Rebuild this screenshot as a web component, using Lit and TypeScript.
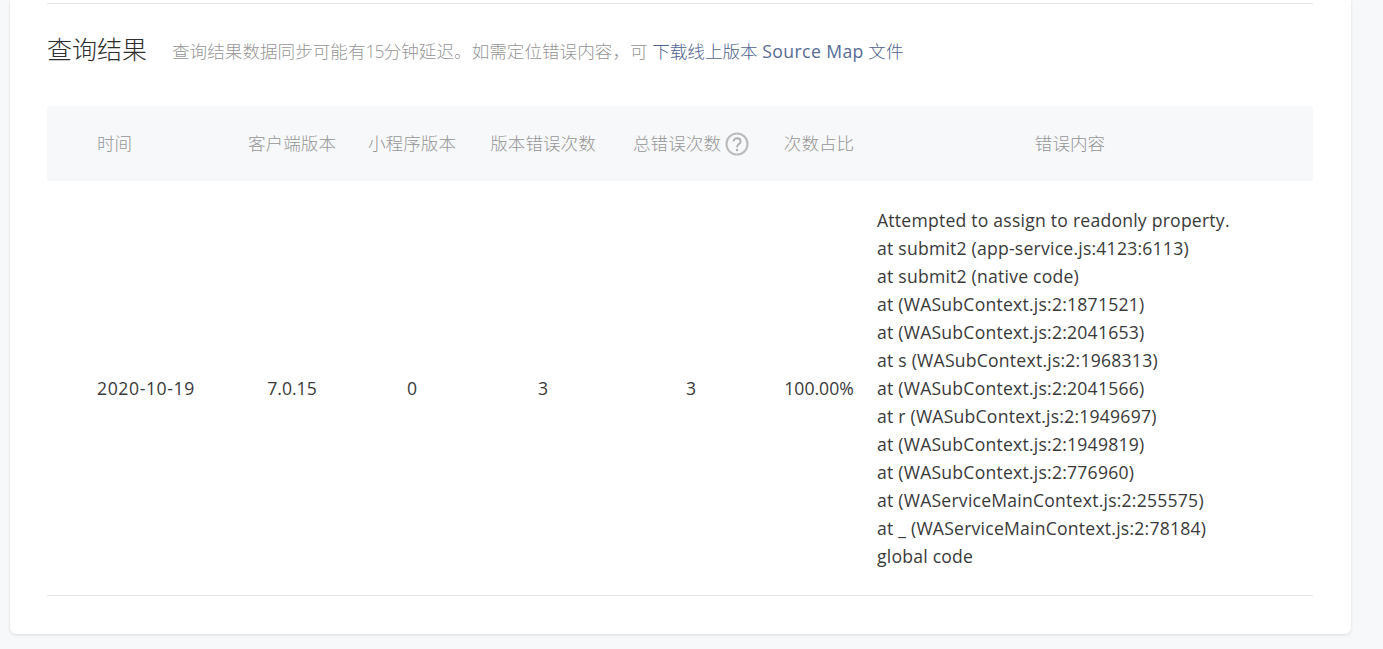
import { LitElement, html, css } from "lit";
import { customElement } from "lit/decorators.js";

const LINES = [
  "Attempted to assign to readonly property.",
  "at submit2 (app-service.js:4123:6113)",
  "at submit2 (native code)",
  "at (WASubContext.js:2:1871521)",
  "at (WASubContext.js:2:2041653)",
  "at s (WASubContext.js:2:1968313)",
  "at (WASubContext.js:2:2041566)",
  "at r (WASubContext.js:2:1949697)",
  "at (WASubContext.js:2:1949819)",
  "at (WASubContext.js:2:776960)",
  "at (WAServiceMainContext.js:2:255575)",
  "at _ (WAServiceMainContext.js:2:78184)",
  "global code",
];

@customElement("app-root")
export class AppRoot extends LitElement {
  static styles = css`
    :host {
      display: block;
      height: 649px;
      overflow: hidden;
      background: #f7f8fa;
      font-family: "Open Sans", "Noto Sans CJK SC", sans-serif;
      font-size: 17.6px;
      color: #3a3a3a;
    }
    .card {
      margin: 0 32px 0 10px;
      height: 634px;
      box-sizing: border-box;
      padding: 3px 38px 0 37px;
      background: #fff;
      border-radius: 0 0 6px 6px;
      box-shadow: 0 1px 3px rgba(0, 0, 0, 0.12);
    }
    .head {
      display: flex;
      align-items: center;
      height: 103px;
      box-sizing: border-box;
      border-top: 1px solid #e7e7e7;
      padding-bottom: 9px;
    }
    .title {
      font-size: 25px;
      font-weight: 300;
      margin: 0 25px 6px 0;
      color: #2e2e2e;
    }
    .desc { color: #969696; font-weight: 300; }
    .num { letter-spacing: -1px; }
    a { color: #4f648f; text-decoration: none; font-weight: 300; }
    .latin { letter-spacing: 0.4px; font-weight: 400; color: #576b95; }
    table {
      width: 100%;
      table-layout: fixed;
      border-collapse: collapse;
    }
    th {
      height: 75px;
      padding: 0 0 2px;
      box-sizing: border-box;
      background: #f7f8fa;
      color: #969696;
      font-weight: 300;
      text-align: center;
    }
    td {
      padding: 25px 0;
      text-align: center;
      border-bottom: 1px solid #e7e7e7;
    }
    .c1 { width: 185px; }
    .c2 { width: 120px; }
    .c3 { width: 120px; }
    .c4 { width: 142px; }
    .c5 { width: 154px; }
    .c6 { width: 102px; }
    .first { text-align: left; padding-left: 50px; }
    td.first { letter-spacing: 0.6px; }
    .msg { padding-left: 7px; padding-right: 50px; }
    td.msg { text-align: left; line-height: 28px; letter-spacing: 0.22px; }
    .msg div { white-space: nowrap; }
    .q {
      display: inline-block;
      vertical-align: -6px;
      margin-left: 4px;
    }
  `;

  render() {
    return html`
      <div class="card">
        <div class="head">
          <h2 class="title">查询结果</h2>
          <span class="desc">查询结果数据同步可能有<span class="num">15</span>分钟延迟。如需定位错误内容，可 <a href="#">下载线上版本 <span class="latin">Source Map</span> 文件</a></span>
        </div>
        <table>
          <colgroup>
            <col class="c1" /><col class="c2" /><col class="c3" /><col class="c4" /><col class="c5" /><col class="c6" /><col />
          </colgroup>
          <thead>
            <tr>
              <th class="first">时间</th>
              <th>客户端版本</th>
              <th>小程序版本</th>
              <th>版本错误次数</th>
              <th>总错误次数<svg class="q" width="24" height="24" viewBox="0 0 24 24" fill="none">
                  <circle cx="12" cy="12" r="10.5" stroke="#bcbcbc" stroke-width="2.1"></circle>
                  <path d="M8.4 9.6c0-2.1 1.6-3.3 3.6-3.3s3.6 1.2 3.6 3.1c0 1.5-.9 2.2-1.9 2.9-.9.6-1.6 1.2-1.6 2.4v.6" stroke="#b0b0b0" stroke-width="1.9"></path>
                  <circle cx="12" cy="18" r="1.2" fill="#b0b0b0"></circle>
                </svg></th>
              <th>次数占比</th>
              <th class="msg">错误内容</th>
            </tr>
          </thead>
          <tbody>
            <tr>
              <td class="first">2020-10-19</td>
              <td>7.0.15</td>
              <td>0</td>
              <td>3</td>
              <td>3</td>
              <td>100.00%</td>
              <td class="msg">${LINES.map((l) => html`<div>${l}</div>`)}</td>
            </tr>
          </tbody>
        </table>
      </div>
    `;
  }
}
